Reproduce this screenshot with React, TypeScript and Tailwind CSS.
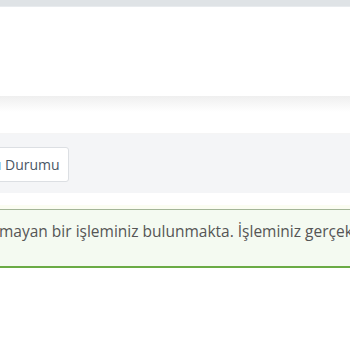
export default function App() {
  return (
    <div className="w-[350px] h-[350px] overflow-hidden bg-white" style={{ fontFamily: '"Open Sans", "Liberation Sans", sans-serif' }}>
      <div className="h-[7px] bg-[#dfe3e6] border-b border-[#e8ebee]" />
      <div className="h-[89px] bg-white" />
      <div className="h-[16px] bg-gradient-to-b from-[#efefef] to-white" />
      <div className="h-[22px] bg-white border-b border-[#f5f5f5]" />
      <div className="h-[59px] bg-[#f4f5f7] flex items-start pt-[13px]">
        <div className="ml-[-61px] h-[35px] flex items-center px-[8px] bg-white border border-[#dcdfe3] rounded-[3px] text-[14px] text-[#4a5766] whitespace-nowrap">
          Başvuru Durumu
        </div>
      </div>
      <div className="h-[12px] bg-white" />
      <div className="h-[4px] bg-[#fbfdf2]" />
      <div className="h-[59px] bg-[#f4faf1] border-t border-[#a3b597] border-b-2 border-b-[#6aab45] pt-[11px] overflow-hidden">
        <p className="ml-[-1px] text-[15.5px] leading-[20px] text-[#555] whitespace-nowrap">
          mayan bir işleminiz bulunmakta. İşleminiz gerçekleşene kadar
        </p>
      </div>
    </div>
  );
}
